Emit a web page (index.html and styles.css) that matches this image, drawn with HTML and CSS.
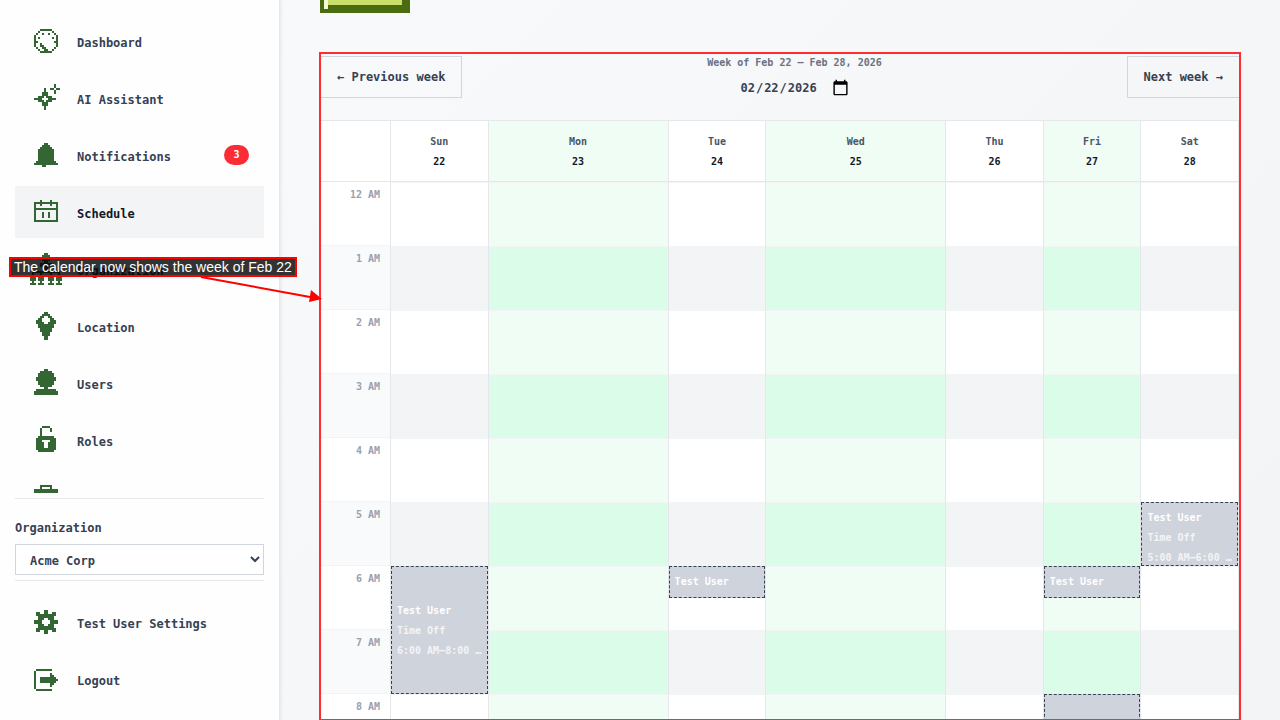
FILE: index.html
```html
<!DOCTYPE html>
<html lang="en">
<head>
    <meta charset="UTF-8">
    <meta name="viewport" content="width=device-width, initial-scale=1.0">
    <title>Schedule</title>
    <link rel="stylesheet" href="styles.css">
</head>
<body>
    <aside class="sidebar">
        <nav class="nav">
            <a class="nav-item" href="#">
                <svg class="icon" viewBox="0 0 16 16"><path d="M5 2h6v1h-6zM4 3h1v1h-1zM11 3h1v1h-1zM3 4h1v1h-1zM6 4h1v1h-1zM9 4h1v1h-1zM12 4h1v1h-1zM2 5h1v6h-1zM13 5h1v6h-1zM4 6h1v1h-1zM11 6h1v1h-1zM3 8h1v1h-1zM12 8h1v1h-1zM5 9h1v2h-1zM6 10h1v2h-1zM7 11h1v2h-1zM8 12h1v1h-1zM3 11h1v1h-1zM12 11h1v1h-1zM4 12h1v1h-1zM11 12h1v1h-1zM5 13h6v1h-6z"/></svg>
                <span class="nav-label">Dashboard</span>
            </a>
            <a class="nav-item" href="#">
                <svg class="icon" viewBox="0 0 16 16"><path d="M12 1h1v2h-1zM12 4h1v2h-1zM10 3h2v1h-2zM13 3h2v1h-2zM7 3h1v2h-1zM6 5h3v2h-3zM4 7h3v1h-3zM8 7h3v1h-3zM2 8h4v1h-4zM9 8h4v1h-4zM4 9h3v1h-3zM8 9h3v1h-3zM6 10h3v2h-3zM7 12h1v2h-1z"/></svg>
                <span class="nav-label">AI Assistant</span>
            </a>
            <a class="nav-item" href="#">
                <svg class="icon" viewBox="0 0 16 16"><path d="M7 2h2v1h-2zM6 3h4v1h-4zM5 4h6v1h-6zM4 5h8v6h-8zM3 11h10v1h-10zM2 12h12v1h-12zM6 13h2v1h-2z"/></svg>
                <span class="nav-label">Notifications</span>
                <span class="badge">3</span>
            </a>
            <a class="nav-item active" href="#">
                <svg class="icon" viewBox="0 0 16 16"><path d="M5 2h1v3h-1zM10 2h1v3h-1zM2 3h12v1h-12zM2 4h1v8h-1zM13 4h1v8h-1zM3 6h10v1h-10zM6 8h1v3h-1zM9 8h1v3h-1zM2 12h12v1h-12z"/></svg>
                <span class="nav-label">Schedule</span>
            </a>
            <a class="nav-item" href="#">
                <svg class="icon" viewBox="0 0 16 16"><path d="M7 0h2v1h-2zM6 1h4v3h-4zM7 4h2v1h-2zM5 5h6v2h-6zM7 7h2v2h-2zM1 9h14v1h-14zM1 10h1v1h-1zM5 10h1v1h-1zM10 10h1v1h-1zM14 10h1v1h-1zM0 11h3v3h-3zM4 11h3v3h-3zM9 11h3v3h-3zM13 11h3v3h-3zM1 14h1v1h-1zM5 14h1v1h-1zM10 14h1v1h-1zM14 14h1v1h-1zM0 15h3v1h-3zM4 15h3v1h-3zM9 15h3v1h-3zM13 15h3v1h-3z"/></svg>
                <span class="nav-label">Organization</span>
            </a>
            <a class="nav-item" href="#">
                <svg class="icon" viewBox="0 0 16 16"><path fill-rule="evenodd" d="M7 1h2v1h1v1h1v1h1v1h1v2h-1v2h-1v2h-1v2h-1v2h-2v-2h-1v-2h-1v-2h-1v-2h-1v-2h1v-1h1v-1h1v-1h1zM7 3v1h-1v2h1v1h2v-1h1v-2h-1v-1z"/></svg>
                <span class="nav-label">Location</span>
            </a>
            <a class="nav-item" href="#">
                <svg class="icon" viewBox="0 0 16 16"><path d="M7 1h2v1h-2zM5 2h6v1h-6zM4 3h8v2h-8zM3 5h10v2h-10zM4 7h8v2h-8zM5 9h6v1h-6zM7 10h2v1h-2zM3 11h10v1h-10zM2 12h12v2h-12z"/></svg>
                <span class="nav-label">Users</span>
            </a>
            <a class="nav-item" href="#">
                <svg class="icon" viewBox="0 0 16 16"><path fill-rule="evenodd" d="M6 1h4v1h-4zM5 2h1v4h-1zM10 2h1v2h-1zM4 6h8v1h1v6h-1v1h-8v-1h-1v-6h1zM6 8v1h1v3h2v-3h1v-1z"/></svg>
                <span class="nav-label">Roles</span>
            </a>
            <a class="nav-item" href="#">
                <svg class="icon" viewBox="0 0 16 16"><path d="M5 2h6v1h-6zM5 3h1v1h-1zM10 3h1v1h-1zM2 4h12v9h-12z"/></svg>
            </a>
        </nav>

        <div class="org">
            <label for="organization">Organization</label>
            <select id="organization">
                <option>Acme Corp</option>
            </select>
        </div>

        <div class="sidebar-footer">
            <a class="nav-item" href="#">
                <svg class="icon" viewBox="0 0 16 16"><path fill-rule="evenodd" d="M7 2h2v2h2v-1h2v2h-1v2h2v2h-2v2h1v2h-2v-1h-2v2h-2v-2h-2v1h-2v-2h1v-2h-2v-2h2v-2h-1v-2h2v1h2zM7 6v1h-1v2h1v1h2v-1h1v-2h-1v-1z"/></svg>
                <span class="nav-label">Test User Settings</span>
            </a>
            <a class="nav-item" href="#">
                <svg class="icon" viewBox="0 0 16 16"><path d="M3 3h8v1h-8zM2 4h1v9h-1zM3 13h8v1h-8zM10 5h1v1h-1zM10 6h2v1h-2zM5 7h8v1h-8zM5 8h9v1h-9zM5 9h8v1h-8zM10 10h2v1h-2zM10 11h1v1h-1z"/></svg>
                <span class="nav-label">Logout</span>
            </a>
        </div>
    </aside>

    <main class="main">
        <button class="pixel-btn" type="button"></button>

        <section class="schedule">
            <div class="toolbar">
                <button class="week-btn" type="button">← Previous week</button>
                <div class="week-picker">
                    <label for="weekDate">Week of Feb 22 – Feb 28, 2026</label>
                    <input type="date" id="weekDate" value="2026-02-22">
                </div>
                <button class="week-btn" type="button">Next week →</button>
            </div>

            <div class="calendar">
                <div class="calendar-row calendar-head">
                    <div class="head-cell"></div>
                    <div class="head-cell"><span>Sun</span><strong>22</strong></div>
                    <div class="head-cell open"><span>Mon</span><strong>23</strong></div>
                    <div class="head-cell"><span>Tue</span><strong>24</strong></div>
                    <div class="head-cell open"><span>Wed</span><strong>25</strong></div>
                    <div class="head-cell"><span>Thu</span><strong>26</strong></div>
                    <div class="head-cell open"><span>Fri</span><strong>27</strong></div>
                    <div class="head-cell"><span>Sat</span><strong>28</strong></div>
                </div>
                <div class="calendar-row" id="calendarBody">
                    <!-- Time and day columns are added by script.js -->
                </div>
            </div>
        </section>
    </main>

    <div class="callout">
        <p class="callout-text">The calendar now shows the week of Feb 22</p>
        <svg class="callout-arrow" viewBox="0 0 130 30">
            <path d="M5 1L114 21" stroke="#ff0000" stroke-width="2"/>
            <path d="M115 14L126 23L113 26z" fill="#ff0000"/>
        </svg>
    </div>

    <script src="script.js"></script>
</body>
</html>
```
FILE: styles.css
```css
* {
    margin: 0;
    padding: 0;
    box-sizing: border-box;
}

body {
    font-family: "DejaVu Sans Mono", monospace;
    font-size: 12px;
    font-weight: bold;
    line-height: 20px;
    color: #364153;
    background: linear-gradient(135deg, #f9fafb, #f3f4f6);
    display: flex;
    height: 100vh;
    overflow: hidden;
}

button, input, select {
    font: inherit;
    color: inherit;
}

/* Sidebar */
.sidebar {
    flex: 0 0 280px;
    display: flex;
    flex-direction: column;
    padding: 15px;
    background: #fefefe;
    border-right: 1px solid #e5e7eb;
    box-shadow: 1px 0 3px rgba(0, 0, 0, 0.08);
}

.nav {
    flex: 1;
    min-height: 0;
    margin-bottom: 5px;
    overflow: hidden;
}

.nav-item {
    display: flex;
    align-items: center;
    gap: 15px;
    height: 52px;
    margin-bottom: 5px;
    padding: 0 15px;
    color: #364153;
    text-decoration: none;
}

.nav-item.active {
    background: #f3f4f6;
    color: #101828;
}

.nav-label {
    padding-top: 3px;
}

.icon {
    width: 32px;
    height: 32px;
    fill: #336633;
    shape-rendering: crispEdges;
}

.badge {
    width: 25px;
    margin-left: auto;
    border-radius: 10px;
    background: #fb2c36;
    color: white;
    font-size: 10px;
    text-align: center;
}

.org {
    display: flex;
    flex-direction: column;
    gap: 5px;
    padding: 18px 0 5px;
    border-top: 1px solid #e5e7eb;
}

.org label {
    line-height: 22px;
}

.org select {
    width: 100%;
    height: 31px;
    padding: 3px 0 0 10px;
    border: 1px solid #d1d5dc;
    border-radius: 0;
    background: white;
}

.sidebar-footer {
    padding-top: 15px;
    border-top: 1px solid #e5e7eb;
}

.sidebar-footer .nav-item:last-child {
    margin-bottom: 0;
}

/* Main area */
.main {
    flex: 1;
    min-width: 0;
    display: flex;
    flex-direction: column;
    gap: 40px;
    padding: 0 40px;
    overflow: hidden;
}

.pixel-btn {
    flex: none;
    width: 90px;
    height: 13px;
    border: 4px solid #4a6b0f;
    border-top: none;
    background: #c8e06a;
    box-shadow: inset 4px 0 #f4fad2, inset -4px -4px #4a6b0f;
}

.schedule {
    position: relative;
    flex: 1;
    min-height: 0;
}

/* Highlight frame, drawn over the calendar */
.schedule::after {
    content: "";
    position: absolute;
    inset: -1px;
    border: 2px solid #ff2d2d;
    pointer-events: none;
}

.toolbar {
    display: flex;
    justify-content: space-between;
    align-items: center;
    margin-bottom: 20px;
}

.week-btn {
    height: 42px;
    padding: 0 16px;
    border: 1px solid #d1d5dc;
    background: transparent;
    cursor: pointer;
}

.week-picker {
    display: flex;
    flex-direction: column;
    align-items: center;
    gap: 2px;
}

.week-picker label {
    font-size: 10px;
    color: #6a7282;
}

.week-picker input {
    height: 25px;
    border: none;
    background: transparent;
}

.week-picker input::-webkit-calendar-picker-indicator {
    width: 17px;
    height: 17px;
    margin-left: 0;
    padding: 0;
    background-size: 17px 17px;
}

/* Calendar */
.calendar {
    border: 1px solid #e5e7eb;
    background: white;
    font-size: 10px;
}

.calendar-row {
    display: grid;
    grid-template-columns: 70px 1fr 1.845fr 1fr 1.845fr 1fr 1fr 1fr;
}

.head-cell {
    display: flex;
    flex-direction: column;
    align-items: center;
    padding: 11px 0 9px;
    border-right: 1px solid #e5e7eb;
    border-bottom: 1px solid #e5e7eb;
    color: #4a5565;
}

.head-cell strong {
    color: #101828;
}

.head-cell.open {
    background: #f0fdf4;
}

.time-column,
.day-column {
    position: relative;
    min-width: 0;
    border-right: 1px solid #e5e7eb;
}

.time-slot {
    height: 64px;
    padding: 3px 10px;
    border-bottom: 1px solid #f3f4f6;
    color: #99a1af;
    text-align: right;
}

.time-slot:nth-child(even) {
    background: #f9fafb;
}

.slot {
    height: 64px;
    border-top: 1px solid #f3f4f6;
}

.slot:nth-child(even) {
    background: #f3f4f6;
}

.open .slot {
    background: #f0fdf4;
}

.open .slot:nth-child(even) {
    background: #dafce8;
}

.event {
    position: absolute;
    left: 0;
    right: 0;
    display: flex;
    flex-direction: column;
    padding: 5px 5px 3px;
    border: 1px dashed #364153;
    background: #cfd3dc;
    color: white;
    overflow: hidden;
}

.event-body {
    margin: auto 0;
}

.event-body p {
    overflow: hidden;
    text-overflow: ellipsis;
    white-space: nowrap;
}

.event-body .event-detail {
    color: #f3f4f6;
}

/* Callout over the page */
.callout {
    position: absolute;
    top: 257px;
    left: 9px;
    font-family: "Liberation Sans", Arial, sans-serif;
    font-size: 14px;
    font-weight: normal;
    line-height: 16px;
}

.callout-text {
    padding: 0 3px;
    border: 2px solid #ff0000;
    background: rgba(0, 0, 0, 0.8);
    color: white;
    white-space: nowrap;
}

.callout-arrow {
    position: absolute;
    top: 19px;
    left: 187px;
    width: 130px;
    height: 30px;
}
```
FILE: script.js
```js
const HOUR_HEIGHT = 64;
const HOURS = 12;

const days = [
    { open: false, events: [{ start: 6, hours: 2, time: '6:00 AM–8:00 AM' }] },
    { open: true, events: [] },
    { open: false, events: [{ start: 6, hours: 0.5, time: '6:00 AM–6:30 AM' }] },
    { open: true, events: [] },
    { open: false, events: [] },
    { open: true, events: [
        { start: 6, hours: 0.5, time: '6:00 AM–6:30 AM' },
        { start: 8, hours: 4, time: '8:00 AM–12:00 PM' }
    ] },
    { open: false, events: [{ start: 5, hours: 1, time: '5:00 AM–6:00 AM' }] }
];

const body = document.getElementById('calendarBody');

// Time labels
let times = '';
for (let h = 0; h < HOURS; h++) {
    times += `<div class="time-slot">${h === 0 ? 12 : h} AM</div>`;
}
body.innerHTML = `<div class="time-column">${times}</div>`;

// Day columns with their events
days.forEach(day => {
    const column = document.createElement('div');
    column.className = day.open ? 'day-column open' : 'day-column';
    column.innerHTML = '<div class="slot"></div>'.repeat(HOURS);

    day.events.forEach(event => {
        column.innerHTML += `
            <div class="event" style="top: ${event.start * HOUR_HEIGHT}px; height: ${event.hours * HOUR_HEIGHT}px">
                <div class="event-body">
                    <p>Test User</p>
                    <p class="event-detail">Time Off</p>
                    <p class="event-detail">${event.time}</p>
                </div>
            </div>
        `;
    });
    body.appendChild(column);
});
```
